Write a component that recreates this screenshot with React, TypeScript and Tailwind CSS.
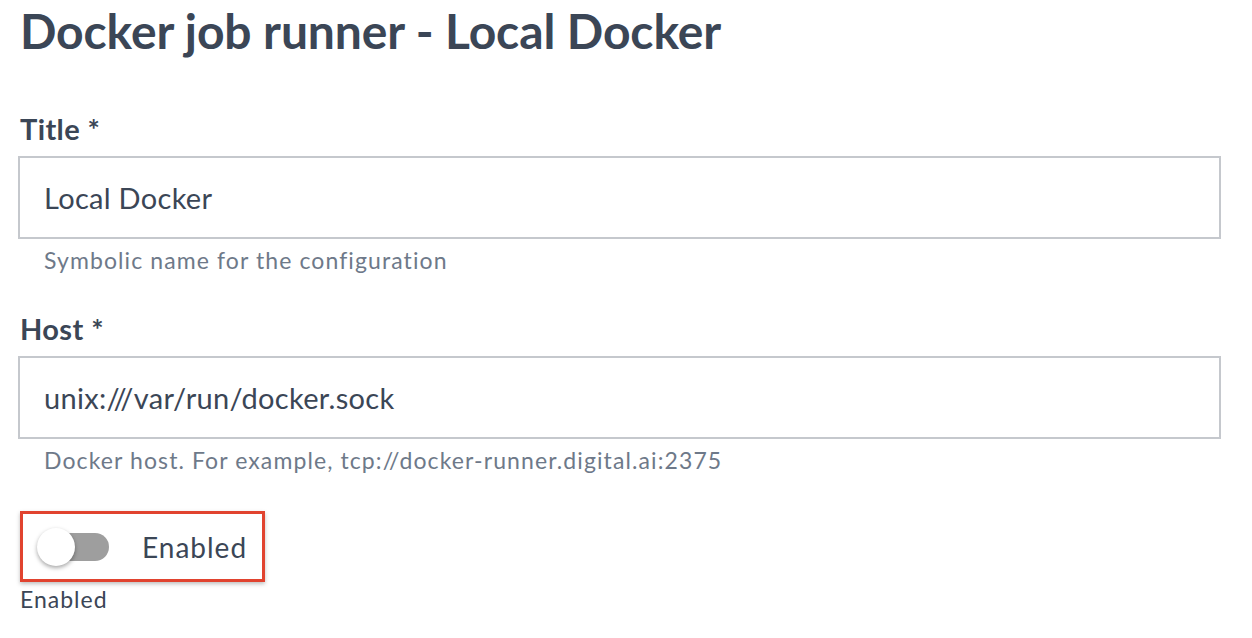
import React from 'react';

const font = { fontFamily: 'Lato, "Open Sans", sans-serif' };

function Field({ label, value, help }: { label: string; value: string; help: string }) {
  return (
    <div className="flex flex-col">
      <label className="text-[29px] leading-[35px] font-bold tracking-[0.4px] text-[#3b4656]">{label}</label>
      <div className="mt-[10px] -ml-[2px] w-[1203px] h-[83px] border-2 border-[#c5c8cd] bg-white flex items-center pl-[24px]">
        <span className="text-[29px] leading-[35px] tracking-[0.3px] text-[#3b4656]">{value}</span>
      </div>
      <p className="mt-[7px] pl-[24px] text-[23px] leading-[28px] tracking-[1.1px] text-[#6e7989]">{help}</p>
    </div>
  );
}

export default function App() {
  return (
    <div className="min-h-screen bg-white pl-[20px] pt-[2px]" style={font}>
      <h1 className="text-[48px] leading-[58px] font-bold tracking-[-0.1px] text-[#3b4656]">Docker job runner - Local Docker</h1>

      <div className="mt-[51px] flex flex-col gap-[37px]">
        <Field label="Title *" value="Local Docker" help="Symbolic name for the configuration" />
        <Field label="Host *" value="unix:///var/run/docker.sock" help="Docker host. For example, tcp://docker-runner.digital.ai:2375" />
      </div>

      {/* highlighted switch */}
      <div className="mt-[37px] w-[245px] h-[71px] border-[3px] border-[#e1432f] shadow-[0_2px_4px_rgba(0,0,0,0.25)] flex items-center pl-[14px]">
        <div className="relative w-[72px] h-[38px] shrink-0">
          <div className="absolute left-[4px] top-[5px] w-[68px] h-[28px] rounded-full bg-[#9e9e9e]" />
          <div className="absolute left-0 top-0 w-[38px] h-[38px] rounded-full bg-white shadow-[0_2px_4px_rgba(0,0,0,0.35)]" />
        </div>
        <span className="ml-[33px] text-[28px] leading-[34px] tracking-[1px] text-[#3b4656]">Enabled</span>
      </div>
      <p className="mt-[3px] text-[23px] leading-[28px] tracking-[1px] text-[#3b4656]">Enabled</p>
    </div>
  );
}
